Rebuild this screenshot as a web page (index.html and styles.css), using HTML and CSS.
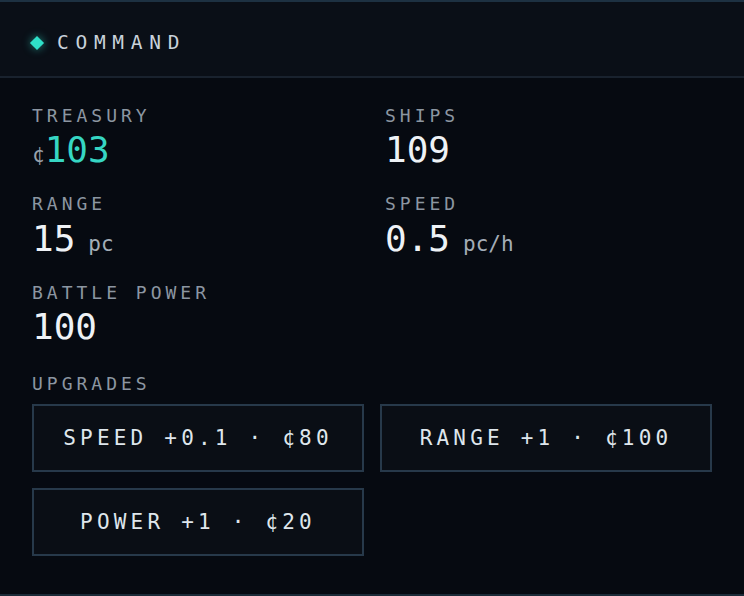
FILE: index.html
```html
<!DOCTYPE html>
<html lang="en">
<head>
    <meta charset="UTF-8">
    <meta name="viewport" content="width=device-width, initial-scale=1.0">
    <title>Command</title>
    <link rel="stylesheet" href="styles.css">
</head>
<body>
    <div class="panel">
        <div class="panel-header">
            <span class="diamond"></span>
            <h2 class="panel-title">COMMAND</h2>
        </div>
        <div class="panel-body">
            <div class="stats">
                <div class="stat">
                    <div class="stat-label">TREASURY</div>
                    <div class="stat-value accent"><span class="currency">¢</span>103</div>
                </div>
                <div class="stat">
                    <div class="stat-label">SHIPS</div>
                    <div class="stat-value">109</div>
                </div>
                <div class="stat">
                    <div class="stat-label">RANGE</div>
                    <div class="stat-value">15<span class="unit">pc</span></div>
                </div>
                <div class="stat">
                    <div class="stat-label">SPEED</div>
                    <div class="stat-value">0.5<span class="unit">pc/h</span></div>
                </div>
                <div class="stat">
                    <div class="stat-label">BATTLE POWER</div>
                    <div class="stat-value">100</div>
                </div>
            </div>

            <div class="stat-label upgrades-label">UPGRADES</div>
            <div class="upgrades">
                <button class="upgrade-btn">SPEED +0.1 · ¢80</button>
                <button class="upgrade-btn">RANGE +1 · ¢100</button>
                <button class="upgrade-btn">POWER +1 · ¢20</button>
            </div>
        </div>
    </div>
</body>
</html>
```

FILE: styles.css
```css
body {
    margin: 0;
    background-color: #060a11;
    color: #e6ecf1;
    font-family: "DejaVu Sans Mono", "Liberation Mono", monospace;
}
.panel {
    border-top: 2px solid #1d3142;
    border-bottom: 2px solid #1b2b38;
}
.panel-header {
    display: flex;
    align-items: center;
    gap: 15px;
    padding: 26px 32px 18px;
    background-color: #0a0f17;
    border-bottom: 2px solid #19222e;
}
.diamond {
    width: 10px;
    height: 10px;
    background-color: #2fe0c8;
    transform: rotate(45deg);
    box-shadow: 0 0 8px rgba(47, 224, 200, 0.6);
}
.panel-title {
    margin: 0;
    font-size: 19.5px;
    line-height: 30px;
    font-weight: normal;
    letter-spacing: 6.7px;
    color: #c9d2db;
}
.panel-body {
    padding: 25px 32px 38px;
}
.stats {
    display: grid;
    grid-template-columns: 1fr 1fr;
    column-gap: 26px;
    row-gap: 20px;
}
.stat-label {
    font-size: 18px;
    line-height: 25.2px;
    letter-spacing: 4px;
    color: #8c96a1;
}
.stat-value {
    font-size: 36px;
    line-height: 43.2px;
    color: #eef2f6;
}
.stat-value.accent {
    color: #36d6c3;
}
.currency {
    font-size: 21px;
    line-height: 1;
    color: #97a1ab;
}
.unit {
    margin-left: 13px;
    font-size: 21px;
    line-height: 1;
    color: #a3adb7;
}
.upgrades-label {
    margin-top: 23px;
    margin-bottom: 8px;
}
.upgrades {
    display: grid;
    grid-template-columns: 1fr 1fr;
    gap: 16px;
}
.upgrade-btn {
    padding: 20px 0;
    font-family: inherit;
    font-size: 21px;
    line-height: 24px;
    letter-spacing: 4.2px;
    color: #dfe6ec;
    background-color: #0a0e15;
    border: 2px solid #27394a;
    border-radius: 0;
    cursor: pointer;
}
```
